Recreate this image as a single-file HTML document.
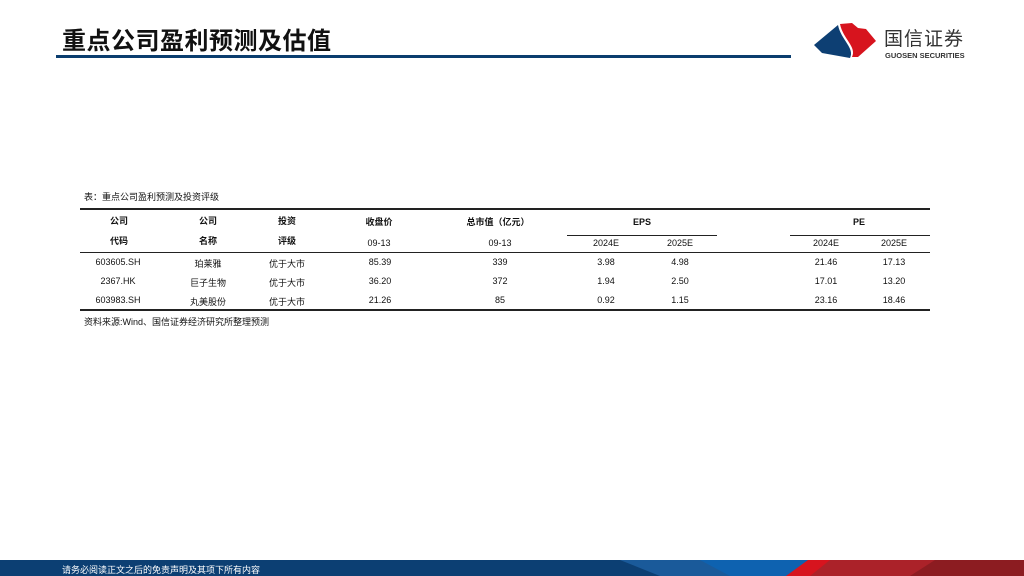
<!DOCTYPE html>
<html><head><meta charset="utf-8"><style>
*{margin:0;padding:0;box-sizing:border-box}
body{width:1024px;height:576px;position:relative;background:#fff;overflow:hidden;font-family:"Liberation Sans","Noto Sans CJK SC",sans-serif;color:#111}
.t{position:absolute;white-space:nowrap;font-size:9px}
.c{transform:translateX(-50%)}
.b{font-weight:bold}
.l{position:absolute;background:#222}
</style></head><body>
<div class="t b" style="left:62px;top:21px;font-size:24px;color:#111;letter-spacing:0.5px">重点公司盈利预测及估值</div>
<div style="position:absolute;left:56px;top:55px;width:735px;height:3px;background:#0a3d6e"></div>
<svg style="position:absolute;left:808px;top:18px" width="80" height="46" viewBox="0 0 80 46">
<path d="M30,7 L6,27 L14,35 L42,40 C47,30 33,22 30,7Z" fill="#0d3f73"/>
<path d="M32,6 L44,5 L50,10 L58,11 L68,23 L50,39 L44,39 C49,29 35,21 32,6Z" fill="#d7141e"/>
</svg>
<div class="t" style="left:884px;top:24px;font-size:19px;color:#333;letter-spacing:1px">国信证券</div>
<div class="t b" style="left:885px;top:51px;font-size:7.5px;color:#333">GUOSEN SECURITIES</div>

<div class="t" style="left:84px;top:190px">表：重点公司盈利预测及投资评级</div>
<div class="l" style="left:80px;top:208px;width:850px;height:1.5px"></div>
<div class="l" style="left:567px;top:235px;width:150px;height:1px"></div>
<div class="l" style="left:790px;top:235px;width:140px;height:1px"></div>
<div class="l" style="left:80px;top:252px;width:850px;height:1px"></div>
<div class="l" style="left:80px;top:309px;width:850px;height:1.5px"></div>

<div class="t b c" style="left:119px;top:214px">公司</div>
<div class="t b c" style="left:119px;top:234px">代码</div>
<div class="t b c" style="left:208px;top:214px">公司</div>
<div class="t b c" style="left:208px;top:234px">名称</div>
<div class="t b c" style="left:287px;top:214px">投资</div>
<div class="t b c" style="left:287px;top:234px">评级</div>
<div class="t b c" style="left:379px;top:215px">收盘价</div>
<div class="t c" style="left:379px;top:238px">09-13</div>
<div class="t b c" style="left:498px;top:215px">总市值（亿元）</div>
<div class="t c" style="left:500px;top:238px">09-13</div>
<div class="t b c" style="left:642px;top:217px">EPS</div>
<div class="t b c" style="left:859px;top:217px">PE</div>
<div class="t c" style="left:606px;top:238px">2024E</div>
<div class="t c" style="left:680px;top:238px">2025E</div>
<div class="t c" style="left:826px;top:238px">2024E</div>
<div class="t c" style="left:894px;top:238px">2025E</div>

<div class="t c" style="left:118px;top:257px">603605.SH</div>
<div class="t c" style="left:208px;top:257px">珀莱雅</div>
<div class="t c" style="left:287px;top:257px">优于大市</div>
<div class="t c" style="left:380px;top:257px">85.39</div>
<div class="t c" style="left:500px;top:257px">339</div>
<div class="t c" style="left:606px;top:257px">3.98</div>
<div class="t c" style="left:680px;top:257px">4.98</div>
<div class="t c" style="left:826px;top:257px">21.46</div>
<div class="t c" style="left:894px;top:257px">17.13</div>

<div class="t c" style="left:118px;top:276px">2367.HK</div>
<div class="t c" style="left:208px;top:276px">巨子生物</div>
<div class="t c" style="left:287px;top:276px">优于大市</div>
<div class="t c" style="left:380px;top:276px">36.20</div>
<div class="t c" style="left:500px;top:276px">372</div>
<div class="t c" style="left:606px;top:276px">1.94</div>
<div class="t c" style="left:680px;top:276px">2.50</div>
<div class="t c" style="left:826px;top:276px">17.01</div>
<div class="t c" style="left:894px;top:276px">13.20</div>

<div class="t c" style="left:118px;top:295px">603983.SH</div>
<div class="t c" style="left:208px;top:295px">丸美股份</div>
<div class="t c" style="left:287px;top:295px">优于大市</div>
<div class="t c" style="left:380px;top:295px">21.26</div>
<div class="t c" style="left:500px;top:295px">85</div>
<div class="t c" style="left:606px;top:295px">0.92</div>
<div class="t c" style="left:680px;top:295px">1.15</div>
<div class="t c" style="left:826px;top:295px">23.16</div>
<div class="t c" style="left:894px;top:295px">18.46</div>

<div class="t" style="left:84px;top:315px">资料来源:Wind、国信证券经济研究所整理预测</div>

<svg style="position:absolute;left:0;top:560px" width="1024" height="16" viewBox="0 0 1024 16">
<rect width="1024" height="16" fill="#0c3f73"/>
<polygon points="620,0 810,0 790,16 660,16" fill="#1a5a9a"/>
<polygon points="700,0 810,0 790,16 730,16" fill="#0e62b0"/>
<polygon points="810,0 1024,0 1024,16 786,16" fill="#ab2229"/>
<polygon points="808,0 830,0 810,16 786,16" fill="#d7141e"/>
<polygon points="935,0 1024,0 1024,16 910,16" fill="#8c1c21"/>
</svg>
<div class="t" style="left:62px;top:563px;color:#fff;font-size:9px">请务必阅读正文之后的免责声明及其项下所有内容</div>
</body></html>
